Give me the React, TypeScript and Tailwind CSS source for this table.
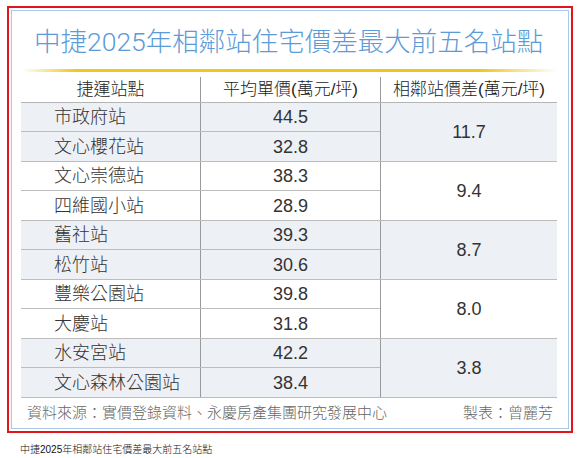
import React from "react";

const groups = [
  { bg: "bg-[#edf0f5]", rows: [["市政府站", "44.5"], ["文心櫻花站", "32.8"]], diff: "11.7" },
  { bg: "bg-white", rows: [["文心崇德站", "38.3"], ["四維國小站", "28.9"]], diff: "9.4" },
  { bg: "bg-[#edf0f5]", rows: [["舊社站", "39.3"], ["松竹站", "30.6"]], diff: "8.7" },
  { bg: "bg-white", rows: [["豐樂公園站", "39.8"], ["大慶站", "31.8"]], diff: "8.0" },
  { bg: "bg-[#edf0f5]", rows: [["水安宮站", "42.2"], ["文心森林公園站", "38.4"]], diff: "3.8" },
];

const font = "font-['Liberation_Sans','Noto_Sans_CJK_TC',sans-serif]";

export default function App() {
  return (
    <div className={`w-[580px] h-[458px] bg-white font-light ${font}`}>
      <div className="pt-[6px] pl-[7px]">
        <div className="w-[566px] h-[427px] border-2 border-[#e5131b] p-[2px]">
          <div className="h-full border border-[#abc8e8] flex flex-col">
            <div className="h-[59px] flex items-center pl-[22px] text-[26.5px] leading-[30px] text-[#5b9bd7] pt-[4px] font-['Roboto','Noto_Sans_CJK_TC',sans-serif]">
              中捷2025年相鄰站住宅價差最大前五名站點
            </div>
            <div className="ml-[10px] w-[536px] h-[3px] bg-[linear-gradient(to_right,rgba(240,196,25,0),#f2c81e_10%,#f0c419_85%,rgba(240,196,25,0))]" />
            <div className="ml-[9px] w-[536px] flex flex-col">
              <div className="flex h-[31px] border-b border-[#b5b5b5] text-[17px] leading-[20px] text-[#222] pt-[5px]">
                <div className="w-[179px] flex items-center justify-center">捷運站點</div>
                <div className="w-[180px] flex items-center justify-center border-l border-[#9a9a9a]">平均單價(萬元/坪)</div>
                <div className="flex-1 flex items-center justify-center border-l border-[#9a9a9a]">相鄰站價差(萬元/坪)</div>
              </div>
              {groups.map((g, gi) => (
                <div key={gi} className={`flex ${g.bg} border-b border-[#bcbcbc] text-[18px] leading-[20px] text-[#333]`}>
                  <div className="w-[359px] flex flex-col">
                    {g.rows.map((r, ri) => (
                      <div key={ri} className={`flex h-[29px] ${ri === 0 ? "border-b border-[#bcbcbc]" : ""}`}>
                        <div className="w-[179px] flex items-center pl-[33px]">{r[0]}</div>
                        <div className="w-[180px] flex items-center justify-center border-l border-[#9a9a9a]">{r[1]}</div>
                      </div>
                    ))}
                  </div>
                  <div className="flex-1 flex items-center justify-center border-l border-[#9a9a9a]">{g.diff}</div>
                </div>
              ))}
              <div className="h-[30px] flex items-center justify-between pl-[6px] pr-[4px] text-[15px] leading-[18px] text-[#666]">
                <span>資料來源：實價登錄資料、永慶房產集團研究發展中心</span>
                <span>製表：曾麗芳</span>
              </div>
            </div>
          </div>
        </div>
      </div>
      <div className="pl-[20px] pt-[11px] text-[10px] leading-[12px] text-[#111]">中捷2025年相鄰站住宅價差最大前五名站點</div>
    </div>
  );
}
